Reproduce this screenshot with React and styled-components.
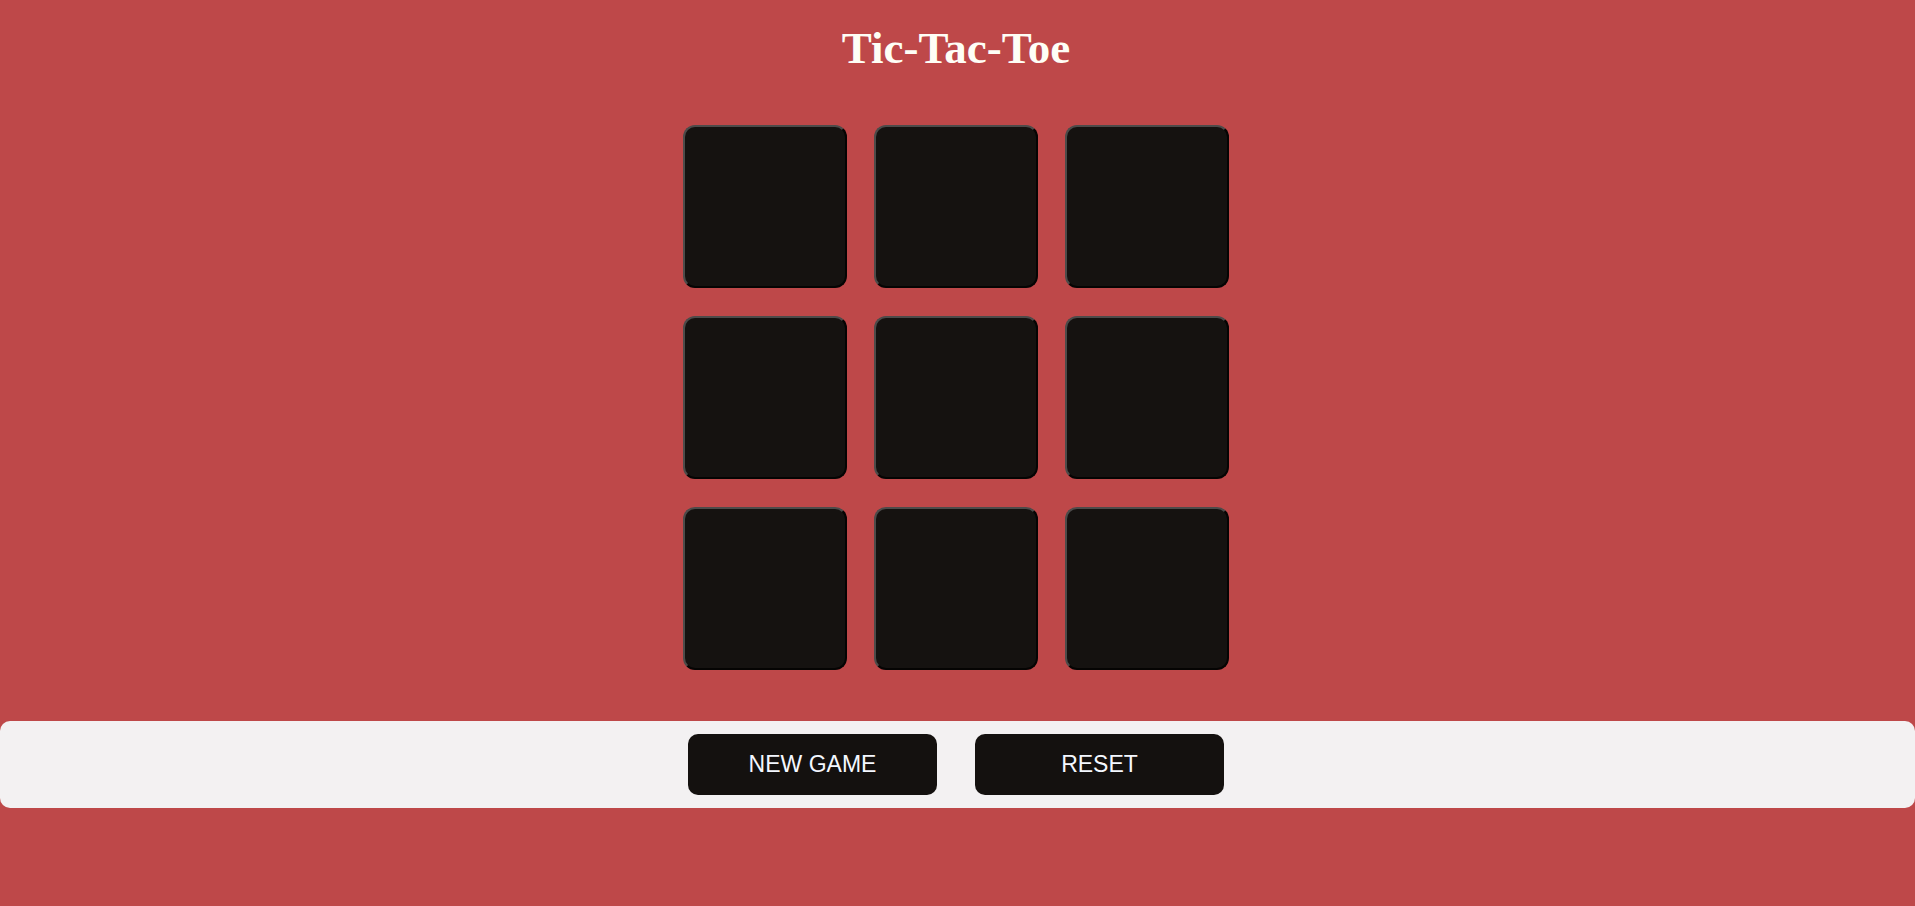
import React, { useState } from 'react'
import styled, { createGlobalStyle } from 'styled-components'

const GlobalStyle = createGlobalStyle`
  html, body {
    margin: 0;
    padding: 0;
    background: #be4849;
    min-height: 100%;
  }
  #root {
    min-height: 906px;
    background: #be4849;
  }
`

const Page = styled.main`
  display: flex;
  flex-direction: column;
  align-items: center;
  padding-top: 24px;
`

const Title = styled.h1`
  margin: 0 3px 0 0;
  font-family: 'Liberation Serif', 'Times New Roman', serif;
  font-size: 45px;
  font-weight: bold;
  line-height: 49px;
  color: #fefef6;
`

const Board = styled.div`
  display: grid;
  grid-template-columns: repeat(3, 164px);
  grid-auto-rows: 163px;
  gap: 28px 27px;
  margin: 52px 3px 0 0;
`

const Cell = styled.button`
  box-sizing: border-box;
  width: 100%;
  height: 100%;
  padding: 0;
  background: #151210;
  border: 2px solid;
  border-color: #4d4b4a #050403 #050403 #4d4b4a;
  border-radius: 12px;
  color: #fefef6;
  font-family: 'Liberation Sans', Arial, sans-serif;
  font-size: 90px;
  cursor: pointer;
`

const Controls = styled.div`
  box-sizing: border-box;
  align-self: stretch;
  display: flex;
  justify-content: center;
  gap: 38px;
  margin-top: 51px;
  padding: 13px 3px 13px 0;
  background: #f3f1f2;
  border-radius: 10px;
`

const Action = styled.button`
  width: 249px;
  height: 61px;
  border: none;
  border-radius: 10px;
  background: #14110f;
  color: #f4f8ff;
  font-family: 'Liberation Sans', Arial, sans-serif;
  font-size: 23px;
  text-transform: uppercase;
  cursor: pointer;
`

const App = () => {
    const [cells, setCells] = useState(Array(9).fill(''))
    const [turn, setTurn] = useState('X')

    const play = (i) => {
        if (cells[i]) return
        const next = [...cells]
        next[i] = turn
        setCells(next)
        setTurn(turn === 'X' ? 'O' : 'X')
    }

    const reset = () => {
        setCells(Array(9).fill(''))
        setTurn('X')
    }

    return (
        <>
            <GlobalStyle />
            <Page>
                <Title>Tic-Tac-Toe</Title>
                <Board>
                    {cells.map((c, i) => (
                        <Cell key={i} onClick={() => play(i)}>
                            {c}
                        </Cell>
                    ))}
                </Board>
                <Controls>
                    <Action onClick={reset}>New Game</Action>
                    <Action onClick={reset}>Reset</Action>
                </Controls>
            </Page>
        </>
    )
}

export default App
